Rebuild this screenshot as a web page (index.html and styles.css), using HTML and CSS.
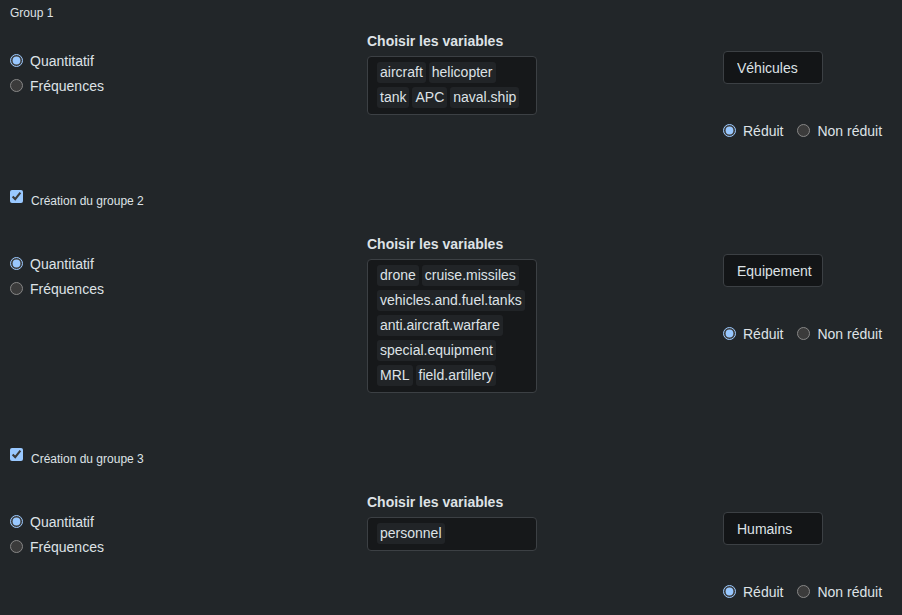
FILE: index.html
```html
<!DOCTYPE html>
<html lang="fr">
<head>
<meta charset="utf-8">
<title>Groupes</title>
<link rel="stylesheet" href="styles.css">
</head>
<body>
<main class="page">
  <section class="section first">
    <div class="sec-title">Group 1</div>
    <div class="row">
      <div class="col-left">
        <label class="radio"><input type="radio" name="t1" checked><span>Quantitatif</span></label>
        <label class="radio"><input type="radio" name="t1"><span>Fréquences</span></label>
      </div>
      <div class="col-mid">
        <div class="field-label">Choisir les variables</div>
        <div class="select-box">
          <span class="tag">aircraft</span><span class="tag">helicopter</span><span class="tag">tank</span><span class="tag">APC</span><span class="tag">naval.ship</span>
        </div>
      </div>
      <div class="col-right">
        <input class="text-input" type="text" value="Véhicules">
        <div class="inline-radios">
          <label class="radio"><input type="radio" name="r1" checked><span>Réduit</span></label>
          <label class="radio"><input type="radio" name="r1"><span>Non réduit</span></label>
        </div>
      </div>
    </div>
  </section>

  <section class="section">
    <label class="sec-check"><input type="checkbox" checked><span>Création du groupe 2</span></label>
    <div class="row">
      <div class="col-left">
        <label class="radio"><input type="radio" name="t2" checked><span>Quantitatif</span></label>
        <label class="radio"><input type="radio" name="t2"><span>Fréquences</span></label>
      </div>
      <div class="col-mid">
        <div class="field-label">Choisir les variables</div>
        <div class="select-box">
          <span class="tag">drone</span><span class="tag">cruise.missiles</span><span class="tag">vehicles.and.fuel.tanks</span><span class="tag">anti.aircraft.warfare</span><span class="tag">special.equipment</span><span class="tag">MRL</span><span class="tag">field.artillery</span>
        </div>
      </div>
      <div class="col-right">
        <input class="text-input" type="text" value="Equipement">
        <div class="inline-radios">
          <label class="radio"><input type="radio" name="r2" checked><span>Réduit</span></label>
          <label class="radio"><input type="radio" name="r2"><span>Non réduit</span></label>
        </div>
      </div>
    </div>
  </section>

  <section class="section">
    <label class="sec-check"><input type="checkbox" checked><span>Création du groupe 3</span></label>
    <div class="row">
      <div class="col-left">
        <label class="radio"><input type="radio" name="t3" checked><span>Quantitatif</span></label>
        <label class="radio"><input type="radio" name="t3"><span>Fréquences</span></label>
      </div>
      <div class="col-mid">
        <div class="field-label">Choisir les variables</div>
        <div class="select-box">
          <span class="tag">personnel</span>
        </div>
      </div>
      <div class="col-right">
        <input class="text-input" type="text" value="Humains">
        <div class="inline-radios">
          <label class="radio"><input type="radio" name="r3" checked><span>Réduit</span></label>
          <label class="radio"><input type="radio" name="r3"><span>Non réduit</span></label>
        </div>
      </div>
    </div>
  </section>
</main>
</body>
</html>
```

FILE: styles.css
```css
html {
  color-scheme: dark;
}
body {
  margin: 0;
  background: #222629;
  color: #dee2e6;
  font-family: "Liberation Sans", Arial, sans-serif;
  font-size: 14px;
  line-height: 20px;
}
.page {
  padding: 0 10px;
  overflow: hidden;
  height: 615px;
}
.section {
  margin-top: 49.5px;
}
.section.first {
  margin-top: 0;
  padding-top: 4.5px;
}
.sec-title {
  font-size: 12px;
  line-height: 17px;
  margin-bottom: 11px;
}
.sec-check {
  display: flex;
  align-items: flex-start;
  font-size: 12px;
  line-height: 17px;
  margin-bottom: 26px;
}
.sec-check input {
  margin: 0;
  width: 13px;
  height: 13px;
}
.sec-check span {
  margin-left: 8px;
  margin-top: 2.5px;
}
.row {
  display: grid;
  grid-template-columns: 357px 356px 1fr;
  align-items: start;
}
.col-left {
  padding-top: 15.5px;
  display: flex;
  flex-direction: column;
}
.radio {
  display: flex;
  align-items: center;
  height: 25px;
  white-space: nowrap;
  flex-shrink: 0;
}
.radio input {
  margin: 0;
  width: 13px;
  height: 13px;
  flex-shrink: 0;
}
.radio span {
  margin-left: 7px;
}
.col-mid {
  padding-bottom: 6px;
}
.field-label {
  font-weight: bold;
  line-height: 17px;
  margin-bottom: 6px;
}
.select-box {
  width: 170px;
  box-sizing: border-box;
  background: #16181a;
  border: 1px solid #3c4044;
  border-radius: 4px;
  padding: 5px 8px 2px 9px;
  display: flex;
  flex-wrap: wrap;
}
.tag {
  background: #212427;
  border-radius: 3px;
  line-height: 21px;
  padding: 0 3px;
  margin: 0 3px 4px 0;
  white-space: nowrap;
}
.col-right {
  padding-top: 18px;
  min-width: 0;
}
.text-input {
  display: block;
  width: 100px;
  height: 33px;
  box-sizing: border-box;
  margin: 0;
  background: #131517;
  border: 1px solid #3c4044;
  border-radius: 4px;
  padding: 1px 0 0 13px;
  color: #dee2e6;
  font-family: "Liberation Sans", Arial, sans-serif;
  font-size: 14px;
  outline: none;
}
.inline-radios {
  display: flex;
  margin-top: 37px;
  white-space: nowrap;
}
.inline-radios .radio {
  height: 20px;
  margin-right: 14px;
}
```
